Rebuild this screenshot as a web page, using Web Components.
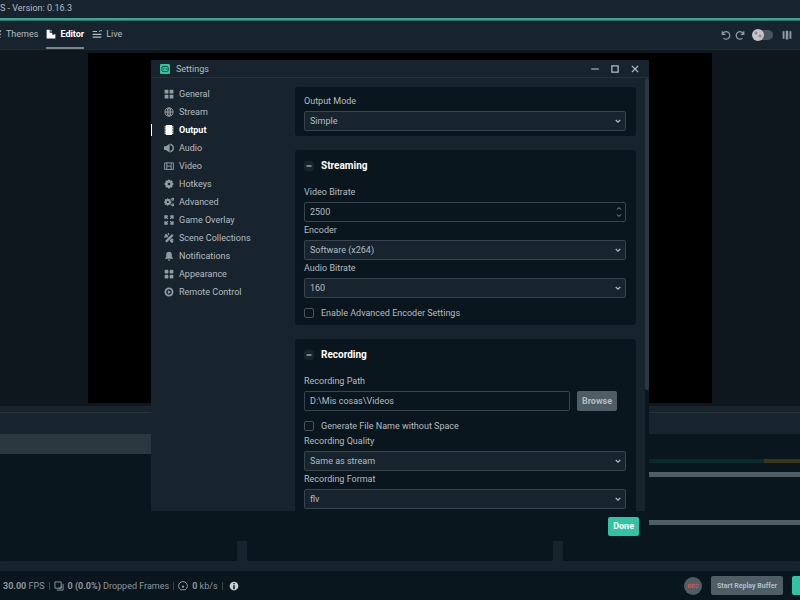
<!DOCTYPE html>
<html lang="en">
<head>
<meta charset="utf-8">
<title>Settings</title>
<style>
  :root {
    --bg: #09161d;
    --section: #17242d;
    --stage: #0e171d;
    --border: #37444b;
    --text: #b4bcc0;
    --icon: #919ba0;
    --white: #ffffff;
    --teal: #31c3a2;
    --button: #4f5e65;
  }
  html, body {
    margin: 0;
    height: 100%;
    overflow: hidden;
    background: var(--bg);
    color: var(--text);
    font: 9px/16px Roboto, "Liberation Sans", sans-serif;
  }
</style>
</head>
<body>
<obs-app></obs-app>

<script>
const ICONS = {
  general: '<path d="M1 1h6v6H1zM9 1h6v6H9zM1 9h6v6H1zM9 9h6v6H9z"/>',
  stream: '<g fill="none" stroke="currentColor" stroke-width="1.6"><circle cx="8" cy="8" r="6.5"/><ellipse cx="8" cy="8" rx="3" ry="6.5"/><path d="M1.500 8h13M8 1v14"/></g>',
  output: '<path d="M3 0h10v16H3z"/><path d="M1 2h3v2H1zM1 5.300h3v2H1zM1 8.700h3v2H1zM1 12h3v2H1zM12 2h3v2h-3zM12 5.300h3v2h-3zM12 8.700h3v2h-3zM12 12h3v2h-3z"/>',
  audio: '<path d="M0 5h3l6-4v14l-6-4H0z"/><path d="M10 3a5 5 0 0 1 0 10M10 1.500a6 6 0 0 1 5 6.500 6 6 0 0 1-5 6.500" fill="none" stroke="currentColor" stroke-width="1.600"/>',
  video: '<path d="M1 3h14v10.500H1zM4.500 3v10.500M11.500 3v10.500M4.500 8.200h7" fill="none" stroke="currentColor" stroke-width="1.500"/>',
  hotkeys: '<circle cx="8" cy="8" r="4" fill="none" stroke="currentColor" stroke-width="3.800"/><path d="M8 1v3M8 12v3M1 8h3M12 8h3M3 3l2.300 2.300M10.700 10.700l2.300 2.300M13 3l-2.300 2.300M5.300 10.700L3 13" stroke="currentColor" stroke-width="3"/>',
  advanced: '<circle cx="6" cy="8" r="3.300" fill="none" stroke="currentColor" stroke-width="3.200"/><path d="M6 2v3M6 11v3M0 8h3M9 8h3M1.800 3.800l2 2M8.200 10.200l2 2M10.200 3.800l-2 2M3.800 10.200l-2 2" stroke="currentColor" stroke-width="2"/><g fill="none" stroke="currentColor" stroke-width="1.800"><circle cx="14" cy="3.500" r="1.600"/><circle cx="14" cy="12.500" r="1.600"/></g>',
  overlay: '<path d="M2 6V2h4M10 2h4v4M14 10v4h-4M6 14H2v-4" fill="none" stroke="currentColor" stroke-width="3"/><path d="M3 3l3 3M13 3l-3 3M3 13l3-3M13 13l-3-3" stroke="currentColor" stroke-width="2"/>',
  scenes: '<path d="M3 14L14 3" stroke="currentColor" stroke-width="3.600"/><path d="M2 2.500l4 4M10 11l4 4" stroke="currentColor" stroke-width="3.400"/><path d="M0 5h4v2H0zM6 0h2v3H6zM11 9h4v3h-4z"/>',
  bell: '<path d="M8 1c3 0 4.500 2 4.500 5v3.500L15 12.500H1L3.500 9.500V6C3.500 3 5 1 8 1zM6 13.500h4a2 2 0 0 1-4 0z"/>',
  appearance: '<rect x="1" y="1" width="6" height="6" rx="2"/><rect x="9" y="1" width="6" height="6" rx="2"/><rect x="1" y="9" width="6" height="6" rx="2"/><rect x="9" y="9" width="6" height="6" rx="2"/>',
  remote: '<circle cx="8" cy="8" r="5.800" fill="none" stroke="currentColor" stroke-width="2.800"/><path d="M6.200 5l5 3-5 3z"/>',
  themes: '<path d="M0 4l4-3h8l3 2-3 3 3 3-3 1 2 4H4V7L2 8z"/>',
  editor: '<path d="M1 1h5v5h4v3h2l3-1v7H1z"/><path d="M7 2h2v2H7z"/>',
  live: '<path d="M1 4h7M1 8.500h14M1 13h14M11 3.500h2M13.500 2.500h2" stroke="currentColor" stroke-width="1.800"/>',
  undo: '<path d="M2 2v5h5M2.500 6.500A6 6 0 1 1 4 13" fill="none" stroke="currentColor" stroke-width="2"/>',
  redo: '<path d="M14 2v5H9M13.500 6.500A6 6 0 1 0 12 13" fill="none" stroke="currentColor" stroke-width="2"/>',
  columns: '<path d="M1 2h3v12H1zM6 1h4v14H6zM12 2h3v12h-3z"/>',
  frames: '<path d="M1.500 1.500h10v10h-10zM4.500 14.500h10v-10M7.500 11.500h4v-4" fill="none" stroke="currentColor" stroke-width="1.500"/>',
  gauge: '<path d="M4.500 14A7 7 0 1 1 11.500 14z" fill="none" stroke="currentColor" stroke-width="1.600"/><circle cx="8" cy="9" r="1.800"/>',
  info: '<path fill-rule="evenodd" d="M8 1a7 7 0 1 1 0 14A7 7 0 0 1 8 1zM7 3v2.200h2.200V3zM6.800 6.800V13h2.400V6.800z"/>',
  logo: '<rect width="16" height="16" rx="2" fill="#31c3a2"/><rect x="3" y="4" width="10" height="8" rx="2" fill="none" stroke="#12473f" stroke-width="1.500"/><path d="M6 7v2M10 7v2" stroke="#12473f" stroke-width="1.600"/>',
  minimize: '<path d="M2 8h12" stroke="currentColor" stroke-width="1.800"/>',
  maximize: '<path d="M3 3h10v10H3z" fill="none" stroke="currentColor" stroke-width="2"/>',
  close: '<path d="M3 3l10 10M13 3L3 13" stroke="currentColor" stroke-width="2"/>',
  chevron: '<path d="M3.500 6l4.500 4.500L12.500 6" fill="none" stroke="currentColor" stroke-width="2.400"/>',
  up: '<path d="M3 10.500L8 6l5 4.500" fill="none" stroke="currentColor" stroke-width="2"/>',
  down: '<path d="M3 5.500L8 10l5-4.500" fill="none" stroke="currentColor" stroke-width="2"/>',
  minus: '<path d="M4 8h8" stroke="currentColor" stroke-width="2"/>'
}

const BASE = /*html*/ `
  <style>
    * { box-sizing: border-box }
    button, input, select { font: inherit; color: inherit; margin: 0 }
    button { border: 0; padding: 0; background: none; display: flex; align-items: center; justify-content: center }
    a { color: inherit; text-decoration: none }
  </style>
`

class ObsIcon extends HTMLElement {
  constructor() {
    super()
    this.attachShadow({mode: 'open'})
  }

  connectedCallback() {
    this.shadowRoot.innerHTML = /*html*/ `
      <style>
        :host { display: block; flex: none; width: 10px; height: 10px }
        svg { display: block; width: 100%; height: 100% }
      </style>
      <svg viewBox="0 0 16 16" fill="currentColor" aria-hidden="true">${ICONS[this.getAttribute('name')]}</svg>
    `
  }
}

class ObsTopBar extends HTMLElement {
  constructor() {
    super()
    this.attachShadow({mode: 'open'})
    this.shadowRoot.innerHTML = BASE + /*html*/ `
      <style>
        :host { display: block; background: var(--section); overflow: hidden }
        .title { height: 18px; white-space: nowrap }
        .line { height: 3px; background: #3fa693; border-bottom: 1px solid #2a6f66 }
        .bar { height: 29px; display: flex; align-items: center; justify-content: space-between; padding-right: 8px; border-bottom: 1px solid #202c34 }
        nav, .tools { display: flex; align-items: center }
        nav { gap: 8px; margin-left: -8px; height: 100% }
        nav a { display: flex; align-items: center; gap: 4px; height: 100%; border-bottom: 2px solid transparent }
        nav a.active { color: var(--white); font-weight: 700; border-color: #7b868c }
        .tools { gap: 4px; color: var(--icon) }
        .switch { appearance: none; width: 21px; height: 10px; margin: 0 5px 0 3px; border-radius: 5px; display: flex; align-items: center; background: linear-gradient(90deg, transparent 5px, #46555b 5px) }
        .switch::before { content: ""; width: 12px; height: 12px; flex: none; border-radius: 50%; background: radial-gradient(circle at 4px 4px, #8e8c95 1px, transparent 2px), radial-gradient(circle at 8px 7px, #8e8c95 1px, transparent 2px), #c6c3ca }
      </style>
      <div class="title">S - Version: 0.16.3</div>
      <div class="line"></div>
      <div class="bar">
        <nav>
          <a href="#themes"><obs-icon name="themes"></obs-icon>Themes</a>
          <a href="#editor" class="active"><obs-icon name="editor"></obs-icon>Editor</a>
          <a href="#live"><obs-icon name="live"></obs-icon>Live</a>
        </nav>
        <div class="tools">
          <button aria-label="Undo"><obs-icon name="undo"></obs-icon></button>
          <button aria-label="Redo"><obs-icon name="redo"></obs-icon></button>
          <input class="switch" type="checkbox" aria-label="Night mode">
          <button aria-label="Layout"><obs-icon name="columns"></obs-icon></button>
        </div>
      </div>
    `
  }
}

class ObsDocks extends HTMLElement {
  constructor() {
    super()
    this.attachShadow({mode: 'open'})
    this.shadowRoot.innerHTML = BASE + /*html*/ `
      <style>
        :host { display: flex; flex-direction: column; background: var(--section); height: 165px; padding: 6px 0 10px }
        .head { flex: none; height: 22px; border-top: 1px solid #26333b }
        .cols { flex: 1; display: grid; grid-template-columns: 31fr 40fr 31fr; gap: 10px }
        .cols > div { background: var(--bg); border-radius: 0 0 2px 2px }
        .row { height: 20px; background: #2b383f }
        .mixer { display: flex; flex-direction: column; padding-top: 25px }
        .level { height: 4px; background: linear-gradient(90deg, #092b2b 85%, #3c3413 85%) }
        .volume { height: 5px; margin-top: 9px; background: var(--button) }
        .volume + .volume { margin-top: 43px }
      </style>
      <div class="head"></div>
      <div class="cols">
        <div><div class="row"></div></div>
        <div></div>
        <div class="mixer">
          <div class="level"></div>
          <div class="volume"></div>
          <div class="volume"></div>
        </div>
      </div>
    `
  }
}

class ObsStatus extends HTMLElement {
  constructor() {
    super()
    this.attachShadow({mode: 'open'})
    this.shadowRoot.innerHTML = BASE + /*html*/ `
      <style>
        :host { display: flex; align-items: center; justify-content: space-between; height: 29px; padding-left: 3px; background: var(--bg); color: #8d979c; white-space: nowrap }
        div { display: flex; align-items: center }
        b { font-weight: 700 }
        .stats { gap: 4px }
        .sep { width: 1px; height: 8px; background: #37444b }
        .info { color: #c9d0d3; margin-left: 2px }
        .actions { gap: 9px }
        .rec { width: 18px; height: 18px; border-radius: 50%; background: var(--button); color: #e0504f; font-size: 6px; font-weight: 700 }
        .replay { height: 19px; padding: 0 6px; border-radius: 2px; background: var(--button); color: #b4bcc0; font-size: 7px; font-weight: 700 }
        .go { width: 8px; height: 19px; border-radius: 2px 0 0 2px; background: var(--teal) }
      </style>
      <div class="stats">
        <span><b>30.00</b> FPS</span><i class="sep"></i>
        <obs-icon name="frames"></obs-icon><span><b>0 (0.0%)</b> Dropped Frames</span><i class="sep"></i>
        <obs-icon name="gauge"></obs-icon><span><b>0</b> kb/s</span><i class="sep"></i>
        <obs-icon class="info" name="info"></obs-icon>
      </div>
      <div class="actions">
        <button class="rec">REC</button>
        <button class="replay">Start Replay Buffer</button>
        <button class="go" aria-label="Go Live"></button>
      </div>
    `
  }
}

class ObsField extends HTMLElement {
  constructor() {
    super()
    this.attachShadow({mode: 'open'})
  }

  connectedCallback() {
    const label = this.getAttribute('label')
    const value = this.getAttribute('value')
    const type = this.getAttribute('type') || 'select'
    let control = `<select id="control"><option>${value}</option></select><obs-icon class="arrow" name="chevron"></obs-icon>`
    if (type === 'number') {
      control = `<input id="control" type="number" value="${value}"><span class="arrow spin"><obs-icon name="up"></obs-icon><obs-icon name="down"></obs-icon></span>`
    }
    if (type === 'text') {
      control = `<input id="control" type="text" value="${value}">`
    }
    this.shadowRoot.innerHTML = BASE + /*html*/ `
      <style>
        :host { display: block }
        label { display: block; height: 18px; line-height: 16px }
        .row { display: flex; align-items: center; gap: 7px }
        .control { flex: 1; display: flex; position: relative }
        input, select {
          appearance: none;
          width: 100%;
          height: 20px;
          padding: 0 5px;
          border: 1px solid var(--border);
          border-radius: 2px;
          background: var(--bg);
          outline: 0;
        }
        select { background: var(--section) }
        input::-webkit-inner-spin-button { appearance: none }
        .arrow { position: absolute; right: 4px; top: 6px; width: 8px; height: 8px; pointer-events: none }
        .spin { right: 3px; top: 3px; height: 14px; color: var(--icon) }
        .spin obs-icon { width: 8px; height: 7px }
      </style>
      <label for="control">${label}</label>
      <div class="row"><div class="control">${control}</div><slot></slot></div>
    `
  }
}

class ObsCheck extends HTMLElement {
  constructor() {
    super()
    this.attachShadow({mode: 'open'})
    this.shadowRoot.innerHTML = BASE + /*html*/ `
      <style>
        :host { display: block; padding-top: 8px }
        label { display: flex; align-items: center; gap: 7px; height: 14px }
        input { appearance: none; width: 10px; height: 10px; border: 1px solid #46535a; border-radius: 2px }
        input:checked { background: var(--teal) }
      </style>
      <label><input type="checkbox"><span><slot></slot></span></label>
    `
  }
}

class ObsPanel extends HTMLElement {
  constructor() {
    super()
    this.attachShadow({mode: 'open'})
  }

  connectedCallback() {
    const heading = this.getAttribute('heading')
    this.shadowRoot.innerHTML = BASE + /*html*/ `
      <style>
        :host { display: block; padding: 6px 10px 5px 9px; border-radius: 3px; background: var(--bg) }
        .head { display: flex; align-items: center; gap: 7px; height: 20px; margin-bottom: 8px }
        h2 { margin: 0; font-size: 10px; font-weight: 700; color: var(--white) }
        button { width: 10px; height: 10px; border-radius: 3px; background: var(--section) }
      </style>
      ${heading ? `<div class="head"><button aria-label="Collapse ${heading}"><obs-icon name="minus"></obs-icon></button><h2>${heading}</h2></div>` : ''}
      <slot></slot>
    `
    const button = this.shadowRoot.querySelector('button')
    if (button) button.addEventListener('click', this._toggle.bind(this))
  }

  _toggle() {
    const slot = this.shadowRoot.querySelector('slot')
    slot.hidden = !slot.hidden
    slot.style.display = slot.hidden ? 'none' : ''
  }
}

class ObsSidebar extends HTMLElement {
  constructor() {
    super()
    this.attachShadow({mode: 'open'})
    const items = [
      ['general', 'General'], ['stream', 'Stream'], ['output', 'Output'], ['audio', 'Audio'],
      ['video', 'Video'], ['hotkeys', 'Hotkeys'], ['advanced', 'Advanced'], ['overlay', 'Game Overlay'],
      ['scenes', 'Scene Collections'], ['bell', 'Notifications'], ['appearance', 'Appearance'], ['remote', 'Remote Control']
    ]
    this.shadowRoot.innerHTML = BASE + /*html*/ `
      <style>
        :host { display: block; flex: none; width: 144px; padding-top: 7px }
        a { display: flex; align-items: center; gap: 5px; height: 18px; padding-left: 13px }
        a obs-icon { color: var(--icon) }
        a.active, a.active obs-icon { color: var(--white); font-weight: 700 }
        a.active { background: linear-gradient(var(--white), var(--white)) left center / 1px 12px no-repeat }
      </style>
      <nav>
        ${items.map(([icon, text]) => `<a href="#${icon}"${icon === 'output' ? ' class="active"' : ''}><obs-icon name="${icon}"></obs-icon>${text}</a>`).join('')}
      </nav>
    `
    this.shadowRoot.querySelector('nav').addEventListener('click', this._select.bind(this))
  }

  _select(e) {
    const link = e.target.closest('a')
    if (!link) return
    this.shadowRoot.querySelector('.active').classList.remove('active')
    link.classList.add('active')
  }
}

class ObsSettings extends HTMLElement {
  constructor() {
    super()
    this.attachShadow({mode: 'open'})
    this.shadowRoot.innerHTML = BASE + /*html*/ `
      <style>
        :host { display: flex; flex-direction: column; background: var(--section) }
        header { flex: none; display: flex; align-items: center; gap: 6px; height: 18px; padding: 0 4px 0 9px; border-bottom: 1px solid #26333b }
        h1 { flex: 1; margin: 0; font-size: 9px; font-weight: 400 }
        .buttons { display: flex }
        .buttons button { width: 20px; height: 16px }
        .body { flex: 1; display: flex; min-height: 0 }
        .content { flex: 1; display: flex; flex-direction: column; gap: 14px; padding-top: 9px; overflow: hidden }
        .content > * { flex: none }
        .track { flex: none; width: 4px; margin-left: 9px; background: var(--bg) }
        .thumb { height: 72%; border-radius: 2px; background: #2b383f }
        footer { flex: none; display: flex; align-items: center; justify-content: flex-end; height: 30px; padding-right: 10px; background: var(--bg) }
        .done, .browse { padding: 0 5px; border-radius: 2px; font-weight: 700 }
        .done { height: 19px; background: var(--teal); color: var(--white) }
        .browse { height: 20px; margin-right: 9px; background: var(--button) }
      </style>
      <header>
        <obs-icon name="logo"></obs-icon>
        <h1>Settings</h1>
        <div class="buttons">
          <button aria-label="Minimize"><obs-icon name="minimize"></obs-icon></button>
          <button aria-label="Maximize"><obs-icon name="maximize"></obs-icon></button>
          <button aria-label="Close"><obs-icon name="close"></obs-icon></button>
        </div>
      </header>
      <div class="body">
        <obs-sidebar></obs-sidebar>
        <div class="content">
          <obs-panel>
            <obs-field label="Output Mode" value="Simple"></obs-field>
          </obs-panel>
          <obs-panel heading="Streaming">
            <obs-field label="Video Bitrate" type="number" value="2500"></obs-field>
            <obs-field label="Encoder" value="Software (x264)"></obs-field>
            <obs-field label="Audio Bitrate" value="160"></obs-field>
            <obs-check>Enable Advanced Encoder Settings</obs-check>
          </obs-panel>
          <obs-panel heading="Recording">
            <obs-field label="Recording Path" type="text" value="D:\\Mis cosas\\Videos">
              <button class="browse">Browse</button>
            </obs-field>
            <obs-check>Generate File Name without Space</obs-check>
            <obs-field label="Recording Quality" value="Same as stream"></obs-field>
            <obs-field label="Recording Format" value="flv"></obs-field>
          </obs-panel>
        </div>
        <div class="track"><div class="thumb"></div></div>
      </div>
      <footer><button class="done">Done</button></footer>
    `
  }
}

class ObsApp extends HTMLElement {
  constructor() {
    super()
    this.attachShadow({mode: 'open'})
    this.shadowRoot.innerHTML = BASE + /*html*/ `
      <style>
        :host { display: flex; flex-direction: column; height: 100vh }
        obs-top-bar, obs-docks, obs-status { flex: none }
        .stage { flex: 1; min-height: 0; display: flex; justify-content: center; padding: 3px 11% 3px; background: var(--stage) }
        .preview { flex: 1; background: #000 }
        .overlay { position: fixed; inset: 0; display: flex; justify-content: center; align-items: flex-start; padding-top: 10vh }
        obs-settings { width: min(498px, 100%); height: min(481px, 90vh) }
      </style>
      <obs-top-bar></obs-top-bar>
      <div class="stage"><div class="preview"></div></div>
      <obs-docks></obs-docks>
      <obs-status></obs-status>
      <div class="overlay"><obs-settings role="dialog" aria-label="Settings"></obs-settings></div>
    `
  }
}

customElements.define('obs-icon', ObsIcon)
customElements.define('obs-top-bar', ObsTopBar)
customElements.define('obs-docks', ObsDocks)
customElements.define('obs-status', ObsStatus)
customElements.define('obs-field', ObsField)
customElements.define('obs-check', ObsCheck)
customElements.define('obs-panel', ObsPanel)
customElements.define('obs-sidebar', ObsSidebar)
customElements.define('obs-settings', ObsSettings)
customElements.define('obs-app', ObsApp)
</script>
</body>
</html>
